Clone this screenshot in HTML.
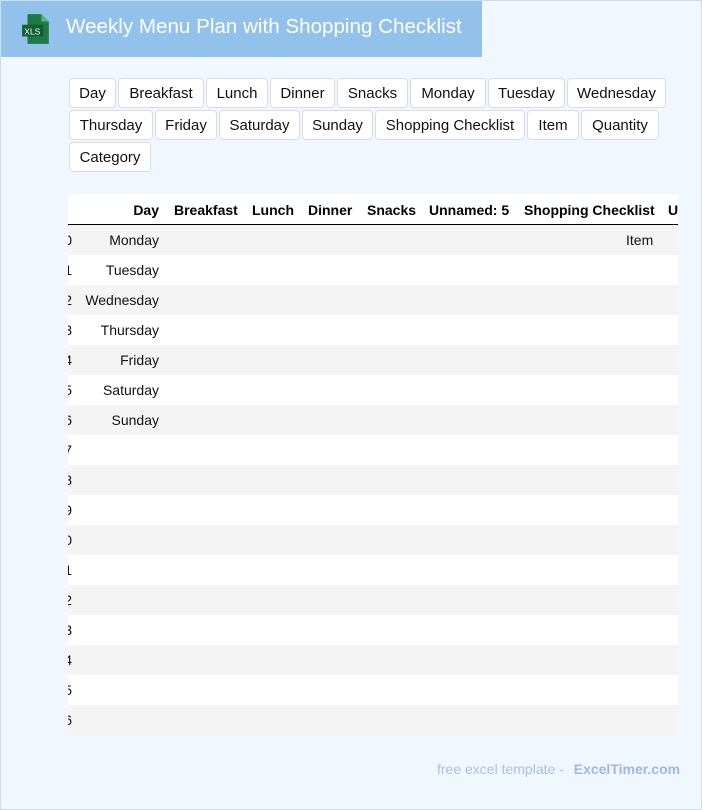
<!DOCTYPE html>
<html><head><style>
*{box-sizing:border-box;margin:0;padding:0}
body{width:702px;height:810px;background:#f0f7ff;font-family:"Liberation Sans",Roboto,sans-serif;position:relative;overflow:hidden}
.frame{position:absolute;left:0;top:0;width:702px;height:810px;border:1px solid #d0dbe6;pointer-events:none}
.hdr{position:absolute;left:0;top:0;width:482px;height:57px;background:#92c1ec}
.hdr h1{position:absolute;left:66px;top:15px;font-size:20.6px;font-weight:normal;color:#fff;white-space:nowrap}
.btns{position:absolute;left:69px;top:78px;width:604px;display:flex;flex-wrap:wrap;gap:2px}
.btns span{height:30px;line-height:29px;padding:0;text-align:center;border:1px solid #d4dde8;border-radius:4px;background:#fff;font-size:15px;color:#111;white-space:nowrap}
.tbl{position:absolute;left:68px;top:194px;width:610px;height:541px;overflow:hidden;background:#fff}
.row{position:absolute;left:0;width:610px;height:30px;font-size:14px;color:#111}
.row span{position:absolute;top:7px;white-space:nowrap}
.h span{font-weight:bold;top:8px;color:#000}
.foot{position:absolute;left:437px;top:761px;font-size:14px;color:#a9bff0}
.foot b{color:#9fb6ee;margin-left:6px}
</style></head><body>
<div class="hdr">
<svg style="position:absolute;left:20px;top:13px" width="32" height="32" viewBox="0 0 30 30"><path d="M7 1h13l7 7v21H7z" fill="#1e7a45"/><path d="M20 1v7h7z" fill="#5fb07f"/><rect x="2" y="11" width="20" height="11" fill="#0f5f33"/><text x="4" y="20" font-size="8" fill="#fff" font-family="Liberation Sans">XLS</text></svg>
<h1>Weekly Menu Plan with Shopping Checklist</h1>
</div>
<div class="btns">
<span style="width:47px">Day</span><span style="width:86px">Breakfast</span><span style="width:62px">Lunch</span><span style="width:65px">Dinner</span><span style="width:71px">Snacks</span><span style="width:76px">Monday</span><span style="width:77px">Tuesday</span><span style="width:99px">Wednesday</span>
<span style="width:84px">Thursday</span><span style="width:62px">Friday</span><span style="width:81px">Saturday</span><span style="width:71px">Sunday</span><span style="width:150px">Shopping Checklist</span><span style="width:52px">Item</span><span style="width:78px">Quantity</span><span style="width:82px">Category</span>
</div>
<div class="tbl" id="t">
<div class="row h" style="top:0;height:31px;border-bottom:1px solid #000">
<span style="right:519px">Day</span><span style="left:106px">Breakfast</span><span style="left:184px">Lunch</span><span style="left:240px">Dinner</span><span style="left:299px">Snacks</span><span style="left:361px">Unnamed: 5</span><span style="left:456px">Shopping Checklist</span><span style="left:600px">U</span>
</div>
</div>
<div class="foot">free excel template - <b>ExcelTimer.com</b></div>
<div class="frame"></div>
<script>
var d=["Monday","Tuesday","Wednesday","Thursday","Friday","Saturday","Sunday"],t=document.getElementById("t"),h="";
for(var i=0;i<17;i++){var n=String(i%10);h+='<div class="row" style="top:'+(31+i*30)+'px;background:'+(i%2?'#fff':'#f4f4f4')+'"><span style="right:606px">'+n+'</span>'+(d[i]?'<span style="right:519px">'+d[i]+'</span>':'')+(i==0?'<span style="left:558px">Item</span>':'')+'</div>';}
t.insertAdjacentHTML("beforeend",h);
</script>
</body></html>
